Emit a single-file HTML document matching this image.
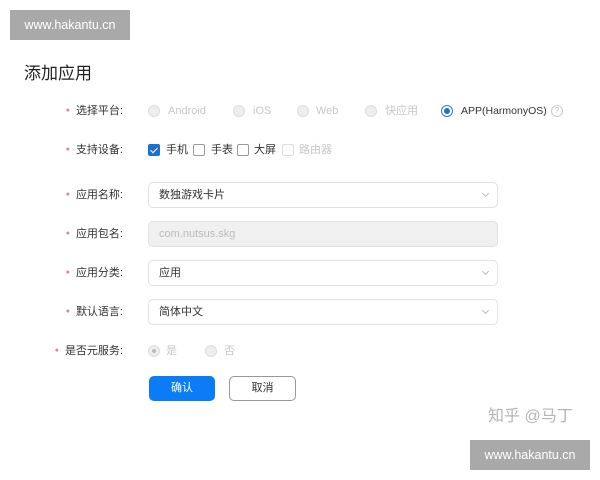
<!DOCTYPE html>
<html><head><meta charset="utf-8"><style>
*{margin:0;padding:0;box-sizing:border-box}
body{width:600px;height:480px;background:#fff;position:relative;overflow:hidden;font-family:"Liberation Sans","Noto Sans CJK SC",sans-serif;color:#333}
.a{position:absolute;white-space:nowrap;line-height:16px}
.wm{background:#a9a9a9;color:#fff;font-size:12.5px;text-align:center;line-height:30px;width:120px;height:30px}
.lab{font-size:11px;color:#333;right:477px;text-align:right}
.star{color:#d88;font-size:7px;vertical-align:2px;margin-right:6px}
.rad{width:12px;height:12px;border-radius:50%;border:1px solid #ddd;background:#eee}
.gt{font-size:11px;color:#c8c8c8}
.cb{width:12px;height:12px;border:1px solid #999;border-radius:2px;background:#fff}
.t{font-size:11px;color:#333}
.inp{left:148px;width:350px;height:26px;border:1px solid #e2e2e2;border-radius:5px;font-size:11px;line-height:24px;padding-left:10px;color:#333}
.chev{position:absolute;right:9px;top:8px;width:5px;height:5px;border-right:1px solid #bbb;border-bottom:1px solid #bbb;transform:rotate(45deg)}
</style></head><body>
<div class="a wm" style="left:10px;top:10px;line-height:30px">www.hakantu.cn</div>
<div class="a" style="left:24px;top:63px;font-size:17px;line-height:22px;color:#222">添加应用</div>

<div class="a lab" style="top:103px"><span class="star">●</span>选择平台:</div>
<div class="a rad" style="left:148px;top:105px"></div><div class="a gt" style="left:168px;top:103px">Android</div>
<div class="a rad" style="left:233px;top:105px"></div><div class="a gt" style="left:253px;top:103px">iOS</div>
<div class="a rad" style="left:297px;top:105px"></div><div class="a gt" style="left:316px;top:103px">Web</div>
<div class="a rad" style="left:365px;top:105px"></div><div class="a gt" style="left:385px;top:103px">快应用</div>
<div class="a rad" style="left:441px;top:105px;background:#fff;border-color:#2a7fd8"><div style="position:absolute;left:2px;top:2px;width:6px;height:6px;border-radius:50%;background:#1f6fd0"></div></div>
<div class="a t" style="left:461px;top:103px;font-size:10.5px">APP(HarmonyOS)</div>
<div class="a" style="left:551px;top:105px;width:12px;height:12px;border:1px solid #ccc;border-radius:50%;font-size:8px;color:#bbb;text-align:center;line-height:10px">?</div>

<div class="a lab" style="top:142px"><span class="star">●</span>支持设备:</div>
<div class="a cb" style="left:148px;top:144px;background:#1f6fd0;border-color:#1f6fd0"><div style="position:absolute;left:3px;top:1px;width:4px;height:7px;border-right:1.5px solid #fff;border-bottom:1.5px solid #fff;transform:rotate(45deg)"></div></div>
<div class="a t" style="left:166px;top:142px">手机</div>
<div class="a cb" style="left:193px;top:144px"></div><div class="a t" style="left:211px;top:142px">手表</div>
<div class="a cb" style="left:237px;top:144px"></div><div class="a t" style="left:254px;top:142px">大屏</div>
<div class="a cb" style="left:282px;top:144px;border-color:#ddd"></div><div class="a gt" style="left:299px;top:142px">路由器</div>

<div class="a lab" style="top:187px"><span class="star">●</span>应用名称:</div>
<div class="a inp" style="top:182px;line-height:24px">数独游戏卡片<div class="chev"></div></div>
<div class="a lab" style="top:226px"><span class="star">●</span>应用包名:</div>
<div class="a inp" style="top:221px;line-height:24px;background:#f0f0f0;color:#bbb">com.nutsus.skg</div>
<div class="a lab" style="top:265px"><span class="star">●</span>应用分类:</div>
<div class="a inp" style="top:260px;line-height:24px">应用<div class="chev"></div></div>
<div class="a lab" style="top:304px"><span class="star">●</span>默认语言:</div>
<div class="a inp" style="top:299px;line-height:24px">简体中文<div class="chev"></div></div>

<div class="a lab" style="top:343px"><span class="star">●</span>是否元服务:</div>
<div class="a rad" style="left:148px;top:345px"><div style="position:absolute;left:3px;top:3px;width:4px;height:4px;border-radius:50%;background:#bbb"></div></div>
<div class="a gt" style="left:166px;top:343px">是</div>
<div class="a rad" style="left:205px;top:345px"></div><div class="a gt" style="left:224px;top:343px">否</div>

<div class="a" style="left:149px;top:376px;width:66px;height:25px;background:#0a7cf5;border-radius:5px;color:#fff;font-size:11px;text-align:center;line-height:25px">确认</div>
<div class="a" style="left:229px;top:376px;width:67px;height:25px;border:1px solid #999;border-radius:5px;color:#333;font-size:11px;text-align:center;line-height:23px">取消</div>

<div class="a" style="left:488px;top:406px;font-size:16px;line-height:22px;color:#b5b5b5">知乎 @马丁</div>
<div class="a wm" style="left:470px;top:440px;line-height:30px">www.hakantu.cn</div>
</body></html>
